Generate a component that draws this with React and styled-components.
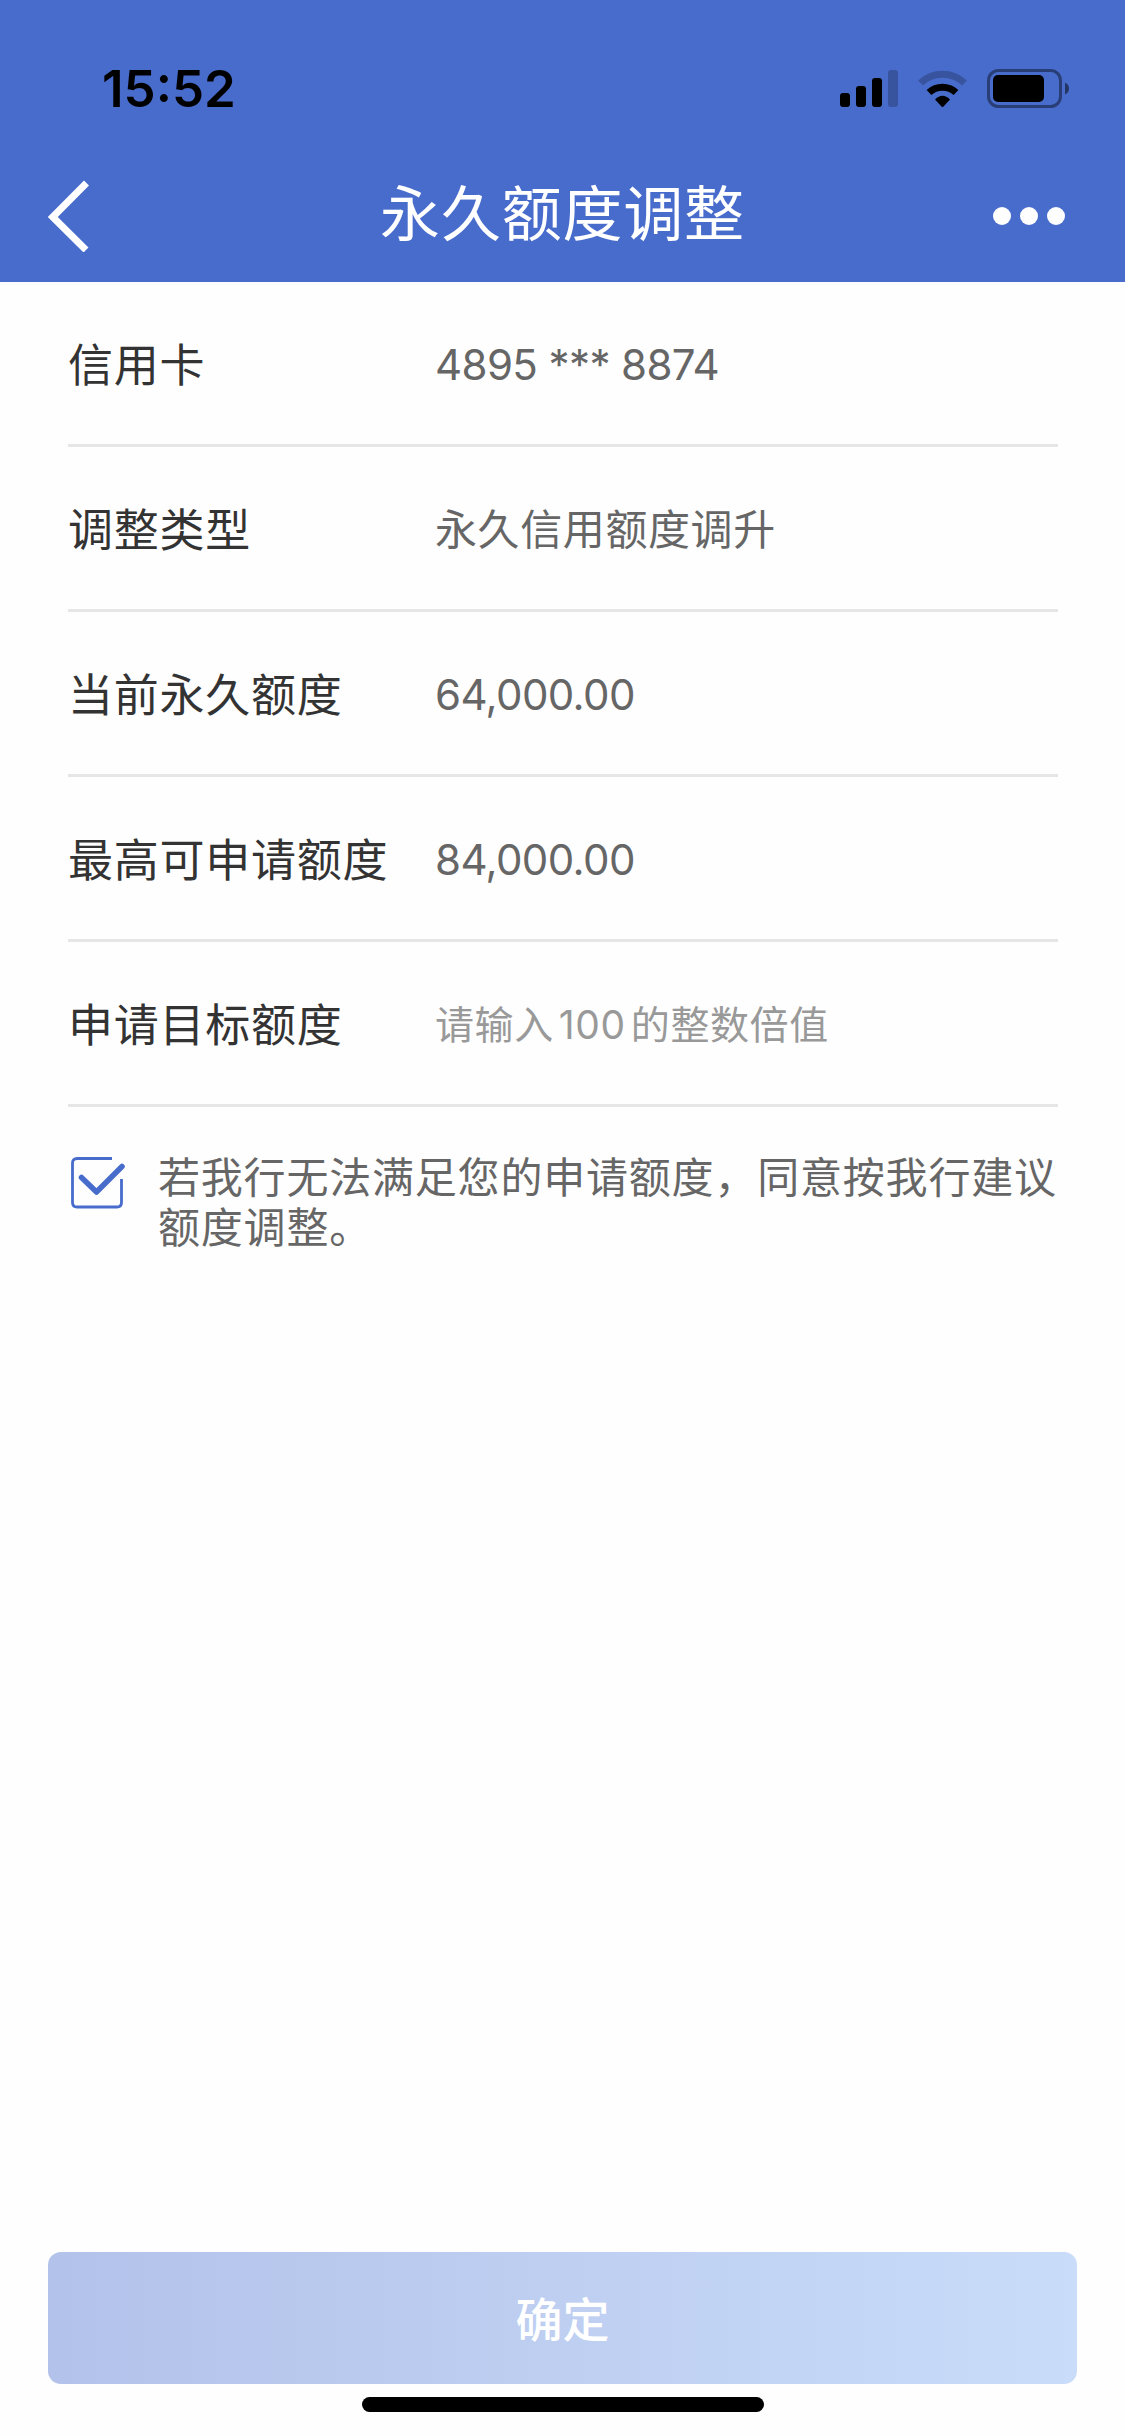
import React, { Fragment } from 'react'
import styled, { createGlobalStyle } from 'styled-components'

const GlobalStyle = createGlobalStyle`
    * {
        box-sizing: border-box;
    }

    body {
        margin: 0;
        background: #fefefe;
        font-family: Inter, 'Noto Sans CJK SC', sans-serif;
    }
`

const Pantalla = styled.div`
    display: flex;
    flex-direction: column;
    width: 1125px;
    height: 2436px;
    background: #fefefe;
`

const Cabecera = styled.header`
    height: 282px;
    background: #486ccc;
`

const BarraEstado = styled.div`
    display: flex;
    align-items: center;
    justify-content: space-between;
    height: 177px;
    padding: 0 56px 0 102px;
`

const Hora = styled.span`
    font-size: 51px;
    font-weight: 600;
    line-height: 60px;
    color: #000;
`

const Iconos = styled.div`
    display: flex;
    align-items: center;
    gap: 19px;
`

const BarraTitulo = styled.div`
    display: grid;
    grid-template-columns: 240px 1fr 240px;
    align-items: center;
    height: 78px;
    padding: 0 48px;
`

const Titulo = styled.h1`
    margin: 0;
    padding-bottom: 4px;
    font-size: 60px;
    font-weight: 400;
    line-height: 74px;
    letter-spacing: 0.8px;
    text-align: center;
    white-space: nowrap;
    color: #fff;
`

const BotonIcono = styled.button`
    display: flex;
    justify-self: ${({ $derecha }) => ($derecha ? 'end' : 'start')};
    padding: 0;
    border: 0;
    background: none;
`

const Formulario = styled.main`
    flex: 1;
    padding: 0 67px 0 68px;
`

const Fila = styled.div`
    display: flex;
    align-items: center;
    height: 165px;
    border-bottom: 3px solid #e6e6e6;
`

const Etiqueta = styled.label`
    width: 367px;
    padding-top: 6px;
    font-size: 45px;
    line-height: 60px;
    letter-spacing: 0.75px;
    white-space: nowrap;
    color: #333;
`

const Valor = styled.span`
    padding-top: 3px;
    font-size: 42px;
    line-height: 60px;
    letter-spacing: ${({ $numero }) => ($numero ? '-0.6px' : '0.6px')};
    white-space: nowrap;
    color: #666;
`

const Campo = styled.input`
    flex: 1;
    min-width: 0;
    height: 63px;
    padding: 3px 0 0;
    border: 0;
    outline: 0;
    background: none;
    font-family: inherit;
    font-size: 39px;
    letter-spacing: 0.6px;
    word-spacing: -6.5px;
    color: #666;

    &::placeholder {
        color: #999;
        opacity: 1;
    }
`

const Acuerdo = styled.div`
    display: flex;
    padding-top: 46px;
`

const Casilla = styled.svg`
    flex: none;
    margin: 3px 30px 0 2px;
`

const TextoAcuerdo = styled.p`
    width: 900px;
    margin: 0;
    font-size: 42px;
    line-height: 50px;
    letter-spacing: 0.8px;
    color: #666;
`

const Pie = styled.footer`
    display: flex;
    flex-direction: column;
    align-items: center;
    gap: 13px;
    padding: 0 48px 24px;
`

const Boton = styled.button`
    width: 1029px;
    height: 132px;
    padding: 0 0 4px;
    border: 0;
    border-radius: 13px;
    background: linear-gradient(90deg, #b3c2ea, #c9dcf9);
    font-family: inherit;
    font-size: 47px;
    font-weight: 500;
    color: #fff;
`

const Indicador = styled.div`
    width: 402px;
    height: 15px;
    border-radius: 8px;
    background: #000;
`

const filas = [
    { etiqueta: '信用卡', valor: '4895 *** 8874', numero: true },
    { etiqueta: '调整类型', valor: '永久信用额度调升' },
    { etiqueta: '当前永久额度', valor: '64,000.00', numero: true },
    { etiqueta: '最高可申请额度', valor: '84,000.00', numero: true },
]

const Senal = () => (
    <svg width="59" height="37" viewBox="0 0 59 37">
        <rect x="0" y="23" width="10" height="14" rx="3" />
        <rect x="16" y="16" width="10" height="21" rx="3" />
        <rect x="32" y="8" width="10" height="29" rx="3" />
        <rect x="48" y="0" width="10" height="37" rx="3" opacity="0.22" />
    </svg>
)

const Wifi = () => (
    <svg width="50" height="37" viewBox="0 0 50 37">
        <path d="M2.5 13A32 32 0 0 1 46.5 13" fill="none" stroke="#000" strokeWidth="7" opacity="0.22" />
        <path d="M11 22.5A20 20 0 0 1 38 22.5" fill="none" stroke="#000" strokeWidth="7" />
        <path d="M24.5 37.5L17 29.5Q24.5 22 32 29.5Z" />
    </svg>
)

const Bateria = () => (
    <svg width="82" height="39" viewBox="0 0 82 39">
        <rect x="1.5" y="1.5" width="72" height="36" rx="10" fill="none" stroke="#000" strokeWidth="3" opacity="0.42" />
        <rect x="6" y="6" width="51" height="27" rx="5" />
        <path d="M78 13.5Q82 15.5 82 19.5Q82 23.5 78 25.5Z" opacity="0.5" />
    </svg>
)

const App = () => {
    return (
        <Fragment>
            <GlobalStyle />

            <Pantalla>

                <Cabecera>
                    <BarraEstado>
                        <Hora>15:52</Hora>
                        <Iconos>
                            <Senal />
                            <Wifi />
                            <Bateria />
                        </Iconos>
                    </BarraEstado>

                    <BarraTitulo>
                        <BotonIcono aria-label="返回">
                            <svg width="42" height="72" viewBox="0 0 42 72">
                                <path d="M38.5 3L4.8 37L38 70" fill="none" stroke="#fff" strokeWidth="7" />
                            </svg>
                        </BotonIcono>
                        <Titulo>永久额度调整</Titulo>
                        <BotonIcono $derecha aria-label="更多">
                            <svg width="84" height="18" viewBox="0 0 84 18">
                                <circle cx="9" cy="9" r="9" fill="#fff" />
                                <circle cx="36" cy="9" r="9" fill="#fff" />
                                <circle cx="63" cy="9" r="9" fill="#fff" />
                            </svg>
                        </BotonIcono>
                    </BarraTitulo>
                </Cabecera>

                <Formulario>
                    {filas.map(({ etiqueta, valor, numero }) => (
                        <Fila key={etiqueta}>
                            <Etiqueta>{etiqueta}</Etiqueta>
                            <Valor $numero={numero}>{valor}</Valor>
                        </Fila>
                    ))}
                    <Fila>
                        <Etiqueta htmlFor="objetivo">申请目标额度</Etiqueta>
                        <Campo id="objetivo" placeholder="请输入 100 的整数倍值" />
                    </Fila>

                    <Acuerdo>
                        <Casilla width="58" height="54" viewBox="0 0 58 54">
                            <path d="M42 2.5H7Q2.5 2.5 2.5 7V46.5Q2.5 51 7 51H47Q51.5 51 51.5 46.5V23" fill="none" stroke="#486ccc" strokeWidth="2.8" />
                            <path d="M11.5 21.5L26.5 36L52 10.5" fill="none" stroke="#486ccc" strokeWidth="5.5" strokeLinecap="round" strokeLinejoin="round" />
                        </Casilla>
                        <TextoAcuerdo>若我行无法满足您的申请额度，同意按我行建议额度调整。</TextoAcuerdo>
                    </Acuerdo>
                </Formulario>

                <Pie>
                    <Boton>确定</Boton>
                    <Indicador />
                </Pie>

            </Pantalla>
        </Fragment>
    )
}

export default App
